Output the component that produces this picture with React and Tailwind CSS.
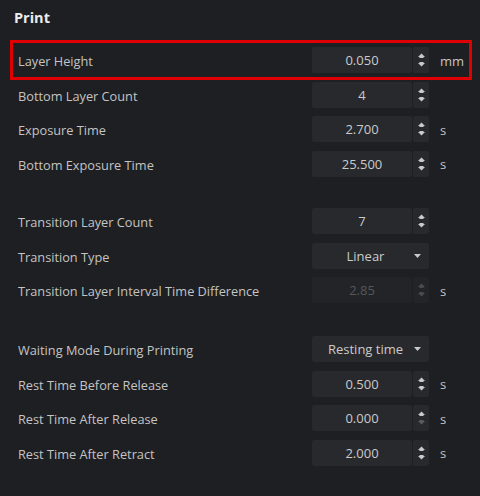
import React from "react";

const font = { fontFamily: '"Open Sans", "Noto Sans", sans-serif' };

function Spinner({ downDim, upDim, disabled }) {
  const on = disabled ? "#4a4b4e" : "#c9c9c9";
  const dim = "#5a5b5e";
  return (
    <div className={`w-[16px] h-full flex flex-col items-center justify-between py-[6px] rounded-[2px] ${disabled ? "bg-[#232427]" : "bg-[#28292c]"}`}>
      <svg width="7" height="5" viewBox="0 0 7 5">
        <polygon points="0,4 3.5,0.5 7,4" fill={upDim ? dim : on} />
        <rect x="1.5" y="3.5" width="4" height="1.5" fill={upDim ? dim : on} />
      </svg>
      <svg width="7" height="5" viewBox="0 0 7 5">
        <rect x="1.5" y="0" width="4" height="1.5" fill={downDim ? dim : on} />
        <polygon points="0,1 3.5,4.5 7,1" fill={downDim ? dim : on} />
      </svg>
    </div>
  );
}

function NumberInput({ value, disabled, downDim }) {
  return (
    <div className="flex h-[26px] w-[117px] gap-[1px]">
      <div
        className={`flex-1 flex items-center justify-center rounded-[2px] pt-[2px] text-[13px] ${
          disabled ? "bg-[#232427] text-[#56575a]" : "bg-[#28292c] text-[#cbcbcb]"
        }`}
      >
        {value}
      </div>
      <Spinner disabled={disabled} downDim={downDim} />
    </div>
  );
}

function Select({ value }) {
  return (
    <div className="relative flex h-[26px] w-[117px] items-center justify-center rounded-[2px] bg-[#28292c] pr-[10px] pt-[2px] text-[13px] text-[#cbcbcb]">
      {value}
      <svg className="absolute right-[8px] top-[11px]" width="7" height="4" viewBox="0 0 7 4">
        <polygon points="0,0 7,0 3.5,4" fill="#c9c9c9" />
      </svg>
    </div>
  );
}

function Row({ label, control, unit, highlight }) {
  return (
    <div
      className={`flex h-[34.5px] items-center pl-[5px] ${
        highlight ? "outline-[3px] outline-solid outline-[#e00000]" : ""
      }`}
    >
      <div className="flex-1 pt-[4px] text-[12.75px] text-[#c4c4c4]">{label}</div>
      <div className="w-[117px]">{control}</div>
      <div className="ml-[11px] w-[29px] pt-[3px] text-[13px] text-[#c4c4c4]">{unit}</div>
    </div>
  );
}

export default function App() {
  return (
    <div className="h-[496px] w-[480px] overflow-hidden bg-[#1e1f22]" style={font}>
      <div className="flex h-[36px] items-center pl-[14px] text-[14.5px] font-bold text-[#ececec]">
        Print
      </div>
      <div className="ml-[13px] mr-[11px] mt-[6.75px] flex flex-col">
        <Row highlight label="Layer Height" control={<NumberInput value="0.050" />} unit="mm" />
        <Row label="Bottom Layer Count" control={<NumberInput value="4" />} />
        <Row label="Exposure Time" control={<NumberInput value="2.700" />} unit="s" />
        <Row label="Bottom Exposure Time" control={<NumberInput value="25.500" />} unit="s" />
        <div className="h-[23px]" />
        <Row label="Transition Layer Count" control={<NumberInput value="7" />} />
        <Row label="Transition Type" control={<Select value="Linear" />} />
        <Row
          label="Transition Layer Interval Time Difference"
          control={<NumberInput value="2.85" disabled />}
          unit="s"
        />
        <div className="h-[24.5px]" />
        <Row label="Waiting Mode During Printing" control={<Select value="Resting time" />} />
        <Row label="Rest Time Before Release" control={<NumberInput value="0.500" />} unit="s" />
        <Row label="Rest Time After Release" control={<NumberInput value="0.000" downDim />} unit="s" />
        <Row label="Rest Time After Retract" control={<NumberInput value="2.000" />} unit="s" />
      </div>
    </div>
  );
}
